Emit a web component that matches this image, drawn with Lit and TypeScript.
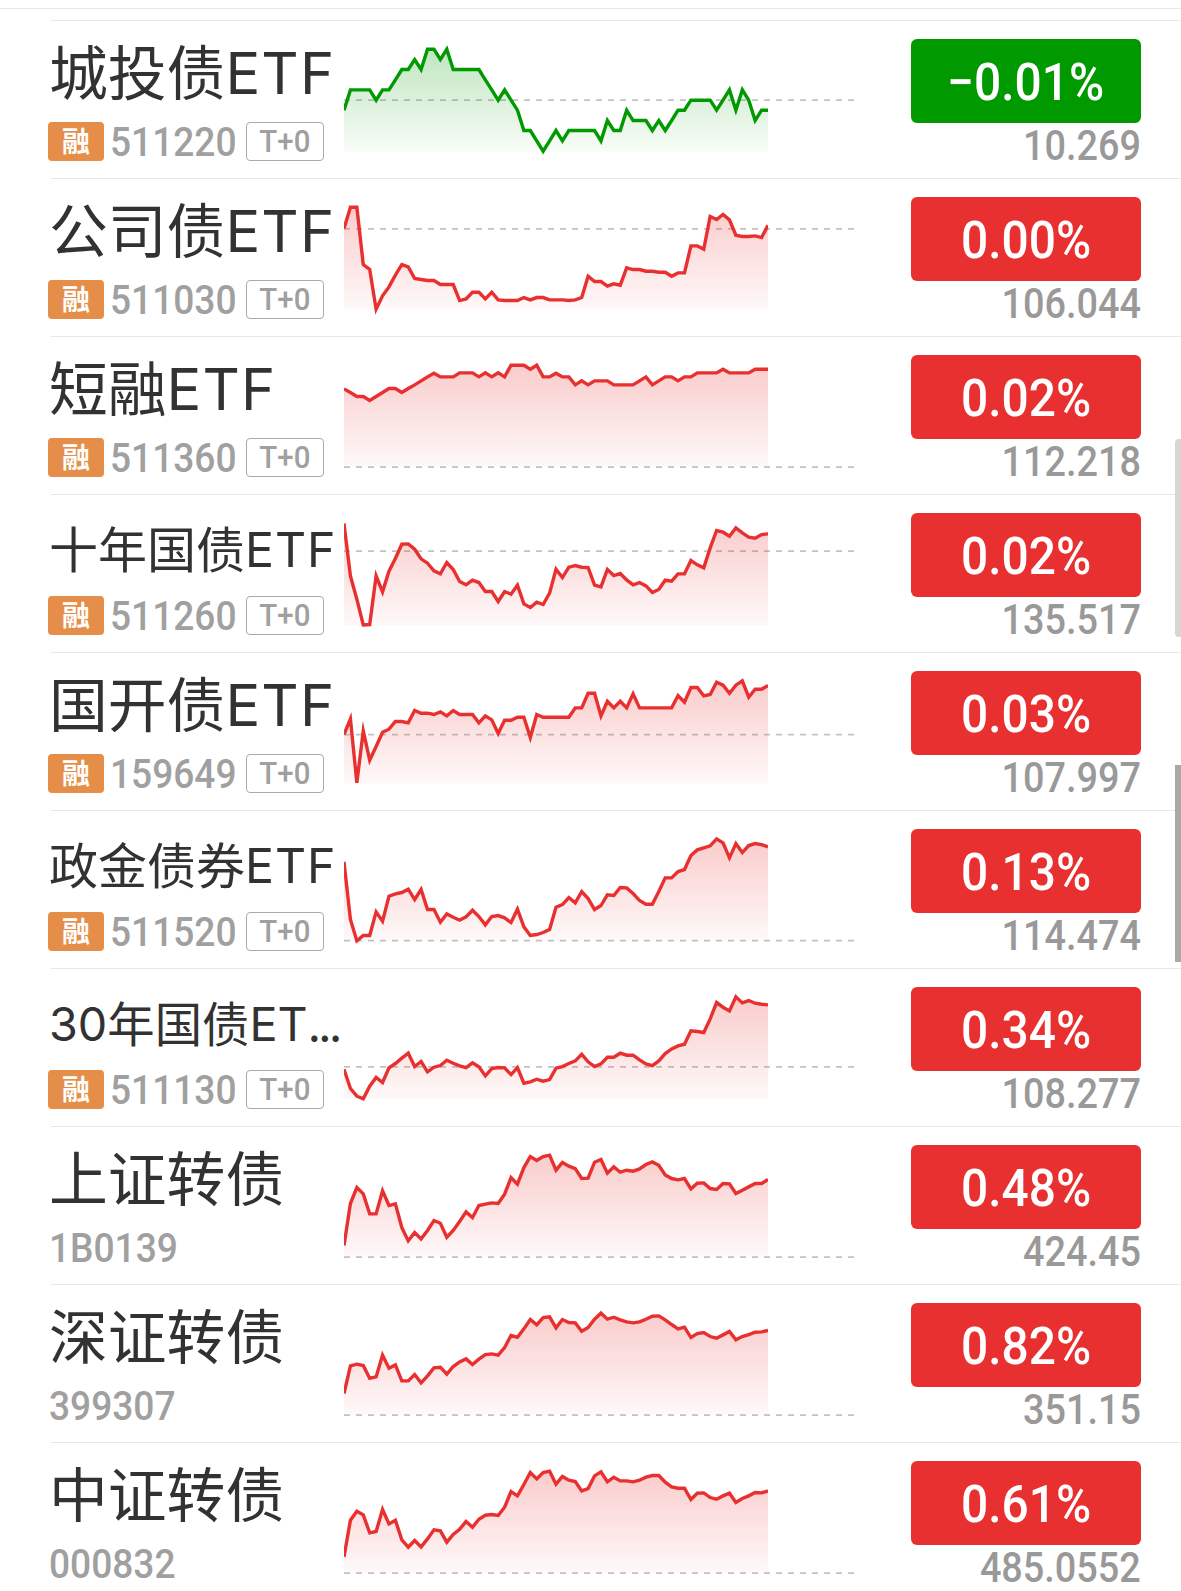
import { LitElement, html, svg, css, nothing } from "lit";
import { customElement, property } from "lit/decorators.js";
import { classMap } from "lit/directives/class-map.js";

interface Quote {
  name: string;
  code: string;
  margin: boolean;
  change: string;
  price: string;
  /** Vertical shift of the series inside the row, px. */
  shift: number;
  /** Previous close level, in series units. */
  base: number;
  /** Lower edge of the filled area, in series units. */
  floor: number;
  series: number[];
}

const UNITS_PER_PX = 3;
const CHART_WIDTH = 510;
const PLOT_WIDTH = 424;

const QUOTES: Quote[] = [
  {
    name: "城投债ETF", code: "511220", margin: true, change: "−0.01%", price: "10.269", shift: -20, base: 300, floor: 453,
    series: [330, 269, 269, 269, 269, 300, 269, 269, 239, 208, 208, 178, 208, 147, 147, 178, 147, 208, 208, 208, 208, 208, 239, 269, 300, 269, 300, 330, 391, 391, 422, 453, 422, 391, 422, 391, 391, 391, 391, 391, 422, 361, 391, 391, 330, 361, 361, 361, 391, 361, 391, 361, 330, 330, 300, 300, 300, 300, 330, 300, 269, 330, 269, 300, 361, 330, 330],
  },
  {
    name: "公司债ETF", code: "511030", margin: true, change: "0.00%", price: "106.044", shift: -3, base: 161, floor: 402,
    series: [160, 96, 96, 268, 283, 402, 362, 335, 300, 268, 275, 310, 313, 316, 316, 328, 328, 328, 376, 371, 351, 351, 371, 351, 374, 376, 376, 376, 367, 374, 367, 367, 374, 374, 374, 376, 374, 367, 303, 319, 319, 333, 326, 330, 278, 283, 283, 288, 288, 291, 291, 303, 293, 293, 212, 212, 222, 124, 133, 118, 134, 180, 184, 184, 182, 187, 150],
  },
  {
    name: "短融ETF", code: "511360", margin: true, change: "0.02%", price: "112.218", shift: -1, base: 396, floor: 395,
    series: [161, 172, 184, 184, 196, 184, 172, 160, 160, 172, 160, 149, 137, 125, 114, 125, 125, 125, 113, 113, 113, 125, 113, 125, 113, 125, 90, 90, 90, 102, 90, 125, 125, 114, 125, 125, 149, 137, 149, 137, 137, 137, 149, 149, 149, 149, 137, 125, 149, 137, 125, 125, 137, 125, 125, 113, 113, 113, 113, 102, 113, 113, 113, 113, 102, 102, 102],
  },
  {
    name: "十年国债ETF", code: "511260", margin: true, change: "0.02%", price: "135.517", shift: 1, base: 168, floor: 389,
    series: [85, 242, 312, 389, 388, 242, 290, 228, 190, 147, 146, 162, 191, 204, 227, 236, 202, 223, 259, 269, 255, 262, 289, 289, 319, 289, 297, 270, 326, 337, 321, 328, 294, 222, 247, 216, 211, 216, 217, 270, 275, 223, 241, 235, 254, 269, 262, 272, 292, 283, 255, 258, 236, 236, 196, 209, 218, 158, 106, 111, 123, 98, 113, 126, 129, 118, 116],
  },
  {
    name: "国开债ETF", code: "159649", margin: true, change: "0.03%", price: "107.997", shift: 3, base: 238, floor: 384,
    series: [238, 191, 383, 227, 315, 274, 231, 222, 199, 199, 203, 166, 174, 174, 178, 170, 182, 166, 178, 178, 178, 203, 182, 194, 235, 195, 195, 186, 186, 247, 178, 186, 186, 186, 186, 186, 158, 158, 114, 114, 182, 138, 158, 138, 158, 116, 158, 158, 158, 158, 158, 158, 121, 141, 97, 97, 122, 118, 81, 90, 114, 90, 77, 126, 102, 102, 91],
  },
  {
    name: "政金债券ETF", code: "511520", margin: true, change: "0.13%", price: "114.474", shift: 0, base: 391, floor: 391,
    series: [155, 328, 392, 376, 376, 305, 333, 258, 251, 247, 237, 268, 238, 298, 298, 336, 311, 321, 330, 320, 300, 319, 344, 319, 316, 323, 337, 297, 350, 376, 373, 367, 358, 291, 283, 262, 278, 244, 265, 298, 286, 254, 256, 232, 233, 250, 271, 282, 282, 244, 203, 203, 184, 178, 136, 119, 113, 107, 86, 98, 143, 100, 127, 106, 100, 103, 110],
  },
  {
    name: "30年国债ET...", code: "511130", margin: true, change: "0.34%", price: "108.277", shift: 0, base: 296, floor: 392,
    series: [303, 361, 384, 392, 354, 328, 343, 299, 286, 270, 255, 295, 280, 311, 297, 292, 276, 285, 293, 298, 284, 296, 323, 301, 298, 299, 319, 298, 345, 341, 333, 339, 334, 300, 295, 286, 278, 258, 281, 295, 287, 267, 267, 255, 261, 261, 275, 287, 292, 278, 256, 242, 233, 228, 188, 190, 193, 152, 103, 117, 128, 86, 104, 97, 105, 108, 110],
  },
  {
    name: "上证转债", code: "1B0139", margin: false, change: "0.48%", price: "424.45", shift: 0, base: 393, floor: 392,
    series: [358, 232, 184, 203, 263, 263, 194, 238, 233, 304, 344, 319, 338, 313, 283, 291, 333, 313, 286, 257, 274, 238, 234, 230, 232, 204, 154, 174, 124, 91, 103, 91, 87, 132, 109, 120, 127, 157, 156, 108, 100, 141, 122, 138, 132, 135, 128, 115, 107, 117, 146, 157, 161, 157, 188, 171, 170, 187, 190, 172, 173, 202, 192, 182, 172, 172, 160],
  },
  {
    name: "深证转债", code: "399307", margin: false, change: "0.82%", price: "351.15", shift: 0, base: 393, floor: 392,
    series: [328, 245, 240, 244, 282, 278, 213, 252, 242, 290, 290, 271, 296, 275, 251, 249, 270, 247, 233, 224, 241, 225, 211, 209, 213, 190, 154, 159, 134, 106, 122, 100, 98, 131, 106, 115, 116, 141, 130, 105, 87, 105, 99, 107, 113, 116, 113, 105, 96, 95, 107, 121, 134, 129, 160, 148, 145, 157, 162, 152, 142, 167, 157, 151, 144, 143, 139],
  },
  {
    name: "中证转债", code: "000832", margin: false, change: "0.61%", price: "485.0552", shift: -2, base: 399, floor: 398,
    series: [350, 240, 213, 224, 278, 274, 208, 251, 240, 299, 321, 301, 320, 296, 269, 272, 306, 283, 267, 244, 261, 237, 225, 223, 226, 201, 154, 167, 133, 97, 116, 97, 93, 132, 109, 120, 124, 152, 145, 107, 95, 125, 111, 122, 122, 125, 120, 111, 106, 106, 126, 140, 144, 144, 178, 159, 158, 172, 177, 167, 159, 187, 175, 167, 157, 158, 152],
  },
];

@customElement("trend-chart")
class TrendChart extends LitElement {
  @property({ attribute: false }) quote!: Quote;

  static styles = css`
    :host { display: block; width: 510px; height: 157px; }
    .plot { display: block; }
    .base { stroke: #000; stroke-opacity: 0.24; stroke-width: 1.8; stroke-dasharray: 6 6; }
    .line { fill: none; stroke-width: 3.4; stroke-linejoin: miter; stroke-miterlimit: 6; }
  `;

  render() {
    const q = this.quote;
    const color = q.change.startsWith("−") ? "#009900" : "#e93030";
    const toY = (v: number) => v / UNITS_PER_PX + q.shift - 0.8;
    const step = PLOT_WIDTH / (q.series.length - 1);
    const pts = q.series.map((v, i) => `${(i * step).toFixed(2)},${toY(v).toFixed(2)}`).join(" ");
    const floor = toY(q.floor) + 0.2;
    return html`<svg class="plot" width=${CHART_WIDTH} height="157" viewBox="0 0 ${CHART_WIDTH} 157">
      <defs>
        <linearGradient id="fade" gradientUnits="userSpaceOnUse" x1="0" x2="0" y1=${floor - 103} y2=${floor}>
          <stop offset="0" stop-color=${color} stop-opacity="0.25"></stop>
          <stop offset="1" stop-color=${color} stop-opacity="0.03"></stop>
        </linearGradient>
        <clipPath id="frame"><rect x="0" y="0" width=${PLOT_WIDTH} height="157"></rect></clipPath>
      </defs>
      ${svg`
        <line class="base" x1="0" x2=${CHART_WIDTH} y1=${toY(q.base)} y2=${toY(q.base)}></line>
        <g clip-path="url(#frame)">
          <polygon points="0,${floor} ${pts} ${PLOT_WIDTH},${floor}" fill="url(#fade)"></polygon>
          <polyline class="line" points=${pts} stroke=${color}></polyline>
        </g>`}
    </svg>`;
  }
}

@customElement("quote-row")
class QuoteRow extends LitElement {
  @property({ attribute: false }) quote!: Quote;

  static styles = css`
    :host {
      display: grid;
      grid-template-columns: 293px 510px 1fr;
      box-sizing: border-box;
      height: 158px;
      border-top: 1px solid #e8e8e8;
      font-family: Roboto, "Noto Sans CJK SC", sans-serif;
      font-weight: 500;
      white-space: nowrap;
    }
    .name {
      height: 92px;
      box-sizing: border-box;
      padding-top: 3px;
      margin-left: -2px;
      font: 400 58.8px/92px "Noto Sans CJK SC", sans-serif;
      color: #323232;
    }
    .name.long { font-size: 49px; padding-top: 6px; }
    .name.cut { font-size: 47.4px; padding-top: 7px; }
    .latin { font-family: Inter, sans-serif; font-size: 0.985em; letter-spacing: 0.02em; line-height: 1; vertical-align: 1px; }
    .cut .latin { letter-spacing: 0; }
    .dots { letter-spacing: -2.5px; line-height: 1; vertical-align: 1px; }
    .meta { display: flex; align-items: center; height: 39px; margin: 9px 0 0 -3px; }
    .meta.plain { margin-left: -2px; }
    .rong {
      width: 56px; height: 39px; border-radius: 4px; margin-right: 6px;
      background: #e58e49; color: #fff; text-align: center;
      font: 700 28px/37px "Noto Sans CJK SC", sans-serif;
    }
    .code { width: 136px; line-height: 40px; height: 39px; color: #a0a0a0; font-size: 41px; }
    .narrow { display: inline-block; transform: scaleX(0.905); transform-origin: left; }
    .tag {
      box-sizing: border-box; width: 78px; height: 39px; border: 1.4px solid #aaa; border-radius: 4px;
      line-height: 38px; text-align: center; font-size: 31px; color: #a0a0a0;
    }
    .tag .narrow { transform: scaleX(0.95); transform-origin: center; }
    .quote { padding: 18px 40px 0 57px; }
    .change {
      height: 84px; line-height: 88px; border-radius: 6px; background: #e93030;
      color: #fff; text-align: center; font-size: 51.6px;
    }
    .change.down { background: #009900; }
    .change .narrow { transform: scaleX(0.928); transform-origin: center; }
    .price { line-height: 45px; text-align: right; color: #999; font-size: 42px; }
    .price .narrow { transform: scaleX(0.9); transform-origin: right; }
  `;

  private renderName(name: string) {
    return name.split(/([A-Z0-9]+|\.{3})/).filter(Boolean).map((part) => {
      if (/^[A-Z0-9]/.test(part)) return html`<span class="latin">${part}</span>`;
      if (part === "...") return html`<span class="dots">${part}</span>`;
      return part;
    });
  }

  render() {
    const q = this.quote;
    return html`
      <div>
        <div class=${classMap({ name: true, long: q.name.length > 6, cut: q.name.endsWith("...") })}>${this.renderName(q.name)}</div>
        <div class=${classMap({ meta: true, plain: !q.margin })}>
          ${q.margin ? html`<span class="rong">融</span>` : nothing}
          <span class="code"><span class="narrow">${q.code}</span></span>
          ${q.margin ? html`<span class="tag"><span class="narrow">T+0</span></span>` : nothing}
        </div>
      </div>
      <trend-chart .quote=${q}></trend-chart>
      <div class="quote">
        <div class=${classMap({ change: true, down: q.change.startsWith("−") })}><span class="narrow">${q.change}</span></div>
        <div class="price"><span class="narrow">${q.price}</span></div>
      </div>
    `;
  }
}

@customElement("app-root")
class AppRoot extends LitElement {
  static styles = css`
    :host { display: block; position: relative; width: 1181px; height: 1591px; overflow: hidden; background: #fff; }
    .edge { height: 8px; border-bottom: 1px solid #e8e8e8; }
    .list { padding: 11px 0 0 51px; }
    .thumb { position: absolute; right: 0; width: 6px; height: 198px; border-radius: 4px 0 0 4px; }
    .thumb.light { top: 439px; background: #d6d6d6; }
    .thumb.dark { top: 765px; height: 197px; background: #a8a8a8; border-radius: 0; }
  `;

  render() {
    return html`
      <div class="edge"></div>
      <div class="list">${QUOTES.map((q) => html`<quote-row .quote=${q}></quote-row>`)}</div>
      <div class="thumb light"></div>
      <div class="thumb dark"></div>
    `;
  }
}
